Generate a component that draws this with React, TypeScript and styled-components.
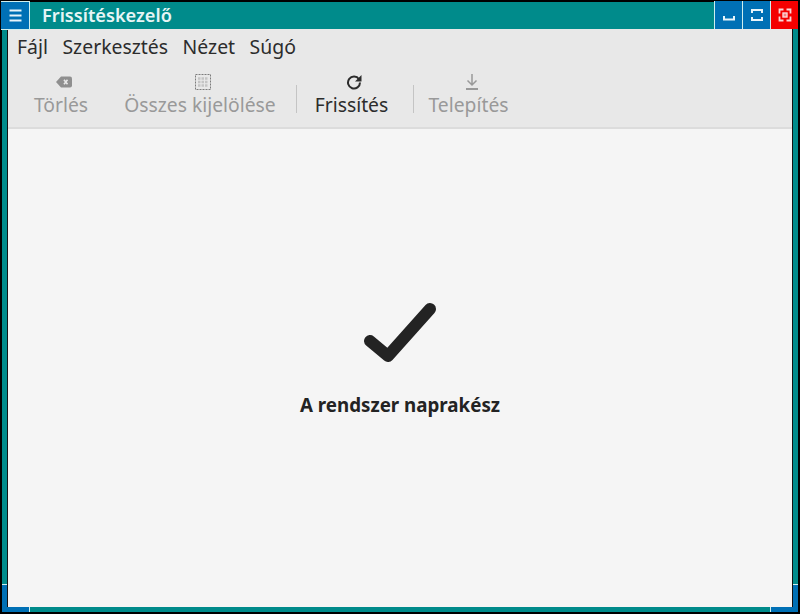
import React from "react";
import styled, { createGlobalStyle } from "styled-components";

const TEAL = "#008b8b";
const BLUE = "#0070b5";
const EDGE = "#cfeeee";
const FONT = `"Noto Sans", "Open Sans", sans-serif`;

const GlobalStyle = createGlobalStyle`
  html, body {
    margin: 0;
    padding: 0;
    background: #000;
  }
  #root {
    width: 800px;
    height: 614px;
  }
`;

const Frame = styled.div`
  position: relative;
  box-sizing: border-box;
  width: 800px;
  height: 614px;
  padding: 2px;
  background: #000;
  display: flex;
  flex-direction: column;
  font-family: ${FONT};
`;

const TitleBar = styled.div`
  height: 27px;
  display: flex;
  background: ${TEAL};
  flex-shrink: 0;
`;

const TitleText = styled.div`
  flex: 1;
  padding-left: 12px;
  color: #e6f5f5;
  font-size: 18.2px;
  font-weight: 600;
  line-height: 27px;
`;

const MenuButton = styled.div`
  box-sizing: border-box;
  width: 29px;
  height: 29px;
  margin: -1px 0 0 -1px;
  background: ${BLUE};
  border: 1px solid ${EDGE};
  border-left: none;
  position: relative;
  z-index: 1;
  display: flex;
  align-items: center;
  justify-content: center;
  color: #e8f4fa;
`;

const WinButton = styled.div<{ $red?: boolean }>`
  box-sizing: border-box;
  width: 28px;
  height: 28px;
  margin-top: -1px;
  background: ${(p) => (p.$red ? "#f40000" : BLUE)};
  border-left: 1px solid ${EDGE};
  display: flex;
  align-items: center;
  justify-content: center;
  color: #e8f4fa;
`;

const Side = styled.div`
  flex: 1;
  min-height: 0;
  display: flex;
  border-style: solid;
  border-color: ${TEAL};
  border-width: 0 5px 5px 5px;
`;

const Window = styled.div`
  flex: 1;
  display: flex;
  flex-direction: column;
  background: #f5f5f5;
  border-left: 1px solid #111;
  border-right: 1px solid #111;
`;

const Header = styled.div`
  background: #e8e8e8;
  border-bottom: 2px solid #dcdcdc;
  height: 98px;
  flex-shrink: 0;
`;

const MenuBar = styled.div`
  display: flex;
  gap: 14.5px;
  padding: 3px 0 0 9px;
  height: 29px;
  align-items: center;
`;

const MenuItem = styled.span`
  font-size: 19.4px;
  color: #2c2c2c;
`;

const ToolBar = styled.div`
  display: flex;
  align-items: flex-start;
  padding-top: 11px;
`;

const ToolButton = styled.div<{ $disabled?: boolean; $width: number }>`
  width: ${(p) => p.$width}px;
  display: flex;
  flex-direction: column;
  align-items: center;
  color: ${(p) => (p.$disabled ? "#999" : "#2c2c2c")};
  font-size: 19.3px;
  line-height: 26px;
`;

const IconSlot = styled.div`
  height: 20px;
  padding-left: 6px;
  display: flex;
  align-items: center;
  justify-content: center;
`;

const Separator = styled.div<{ $left: number }>`
  width: 1px;
  height: 28px;
  margin: 13px 0 0 ${(p) => p.$left}px;
  background: #c4c4c4;
`;

const Content = styled.div`
  flex: 1;
  display: flex;
  flex-direction: column;
  align-items: center;
  justify-content: center;
  padding-bottom: 17px;
  gap: 30px;
`;

const StatusText = styled.div`
  font-size: 18.75px;
  font-weight: 700;
  color: #232323;
`;

const Corner = styled.div<{ $right?: boolean }>`
  position: absolute;
  bottom: 2px;
  ${(p) => (p.$right ? "right: 2px;" : "left: 2px;")}
  box-sizing: border-box;
  width: 27px;
  height: 27px;
  pointer-events: none;
  border-style: solid;
  border-color: ${BLUE};
  border-width: ${(p) => (p.$right ? "0 5px 5px 0" : "0 0 5px 5px")};

  &::before {
    content: "";
    position: absolute;
    top: -1px;
    ${(p) => (p.$right ? "right: -5px;" : "left: -5px;")}
    width: 5px;
    height: 1px;
    background: ${EDGE};
  }

  &::after {
    content: "";
    position: absolute;
    bottom: -5px;
    ${(p) => (p.$right ? "left: -1px;" : "right: -1px;")}
    width: 1px;
    height: 5px;
    background: ${EDGE};
  }
`;

function MenuGlyph() {
  return (
    <svg width="13" height="13" viewBox="0 0 13 13" fill="none" stroke="currentColor">
      <path d="M0.500 1.500h12M0.500 6.500h12M0.500 11.500h12" strokeWidth="2" />
    </svg>
  );
}

function MinimizeGlyph() {
  return (
    <svg width="14" height="14" viewBox="0 0 14 14" fill="none" stroke="currentColor" strokeWidth="2">
      <path d="M2 8v3.500h10V8" />
    </svg>
  );
}

function MaximizeGlyph() {
  return (
    <svg width="14" height="14" viewBox="0 0 14 14" fill="none" stroke="currentColor" strokeWidth="2">
      <path d="M2 5V2h10v3M2 9v3h10V9" />
    </svg>
  );
}

function CloseGlyph() {
  return (
    <svg width="14" height="14" viewBox="0 0 14 14" fill="none" stroke="#f8d8d8" strokeWidth="1.800">
      <path d="M1.500 5.500v-4h4M8.500 1.500h4v4M12.500 8.500v4h-4M5.500 12.500h-4v-4" />
      <rect x="5" y="5" width="4" height="4" fill="#f88080" strokeWidth="1.400" />
    </svg>
  );
}

function ClearGlyph() {
  return (
    <svg width="16" height="12" viewBox="0 0 16 12">
      <path d="M5 0.500h9a2 2 0 0 1 2 2v7a2 2 0 0 1-2 2H5L0 6z" fill="#8f8f8f" />
      <path d="M8 3.800l3.500 4.400M11.500 3.800l-3.500 4.400" stroke="#e8e8e8" strokeWidth="1.600" />
    </svg>
  );
}

function SelectAllGlyph() {
  return (
    <svg width="16" height="16" viewBox="0 0 16 16">
      <path d="M3 4.500h10M3 8h10M3 11.500h10" stroke="#c4c4c4" strokeWidth="2.500" strokeDasharray="2.500 1" fill="none" />
      <rect x="0.500" y="0.500" width="15" height="15" fill="none" stroke="#7c7c7c" strokeDasharray="2 1" />
    </svg>
  );
}

function RefreshGlyph() {
  return (
    <svg width="17" height="16" viewBox="0 0 17 16" fill="none">
      <path d="M13 5.200A6 6 0 1 0 14 8.500" stroke="#2c2c2c" strokeWidth="2" />
      <path d="M15.500 1v6.500H9z" fill="#2c2c2c" />
    </svg>
  );
}

function InstallGlyph() {
  return (
    <svg width="12" height="16" viewBox="0 0 12 16" fill="none" stroke="#999" strokeWidth="1.500">
      <path d="M6 0v11M1.500 6.500L6 11l4.500-4.500" />
      <path d="M0 15h12" strokeWidth="2" />
    </svg>
  );
}

function CheckGlyph() {
  return (
    <svg width="72" height="60" viewBox="0 0 72 60" fill="none">
      <path d="M6 39l18 15L66 7" stroke="#232323" strokeWidth="12" strokeLinecap="round" strokeLinejoin="round" />
    </svg>
  );
}

export default function App() {
  return (
    <>
      <GlobalStyle />
      <Frame>
        <TitleBar>
          <MenuButton>
            <MenuGlyph />
          </MenuButton>
          <TitleText>Frissítéskezelő</TitleText>
          <WinButton>
            <MinimizeGlyph />
          </WinButton>
          <WinButton>
            <MaximizeGlyph />
          </WinButton>
          <WinButton $red>
            <CloseGlyph />
          </WinButton>
        </TitleBar>
        <Side>
          <Window>
            <Header>
              <MenuBar>
                <MenuItem>Fájl</MenuItem>
                <MenuItem>Szerkesztés</MenuItem>
                <MenuItem>Nézet</MenuItem>
                <MenuItem>Súgó</MenuItem>
              </MenuBar>
              <ToolBar>
                <ToolButton $disabled $width={106}>
                  <IconSlot>
                    <ClearGlyph />
                  </IconSlot>
                  Törlés
                </ToolButton>
                <ToolButton $disabled $width={172}>
                  <IconSlot>
                    <SelectAllGlyph />
                  </IconSlot>
                  Összes kijelölése
                </ToolButton>
                <Separator $left={10} />
                <ToolButton $width={109}>
                  <IconSlot>
                    <RefreshGlyph />
                  </IconSlot>
                  Frissítés
                </ToolButton>
                <Separator $left={7} />
                <ToolButton $disabled $width={109}>
                  <IconSlot>
                    <InstallGlyph />
                  </IconSlot>
                  Telepítés
                </ToolButton>
              </ToolBar>
            </Header>
            <Content>
              <CheckGlyph />
              <StatusText>A rendszer naprakész</StatusText>
            </Content>
          </Window>
        </Side>
        <Corner />
        <Corner $right />
      </Frame>
    </>
  );
}
